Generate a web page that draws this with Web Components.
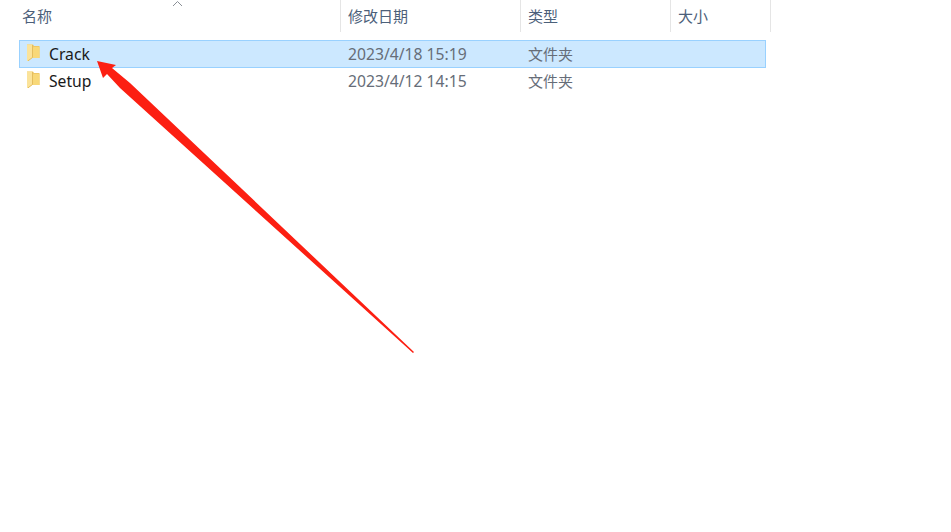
<!DOCTYPE html>
<html>
<head>
<meta charset="utf-8">
<style>
  html, body { margin: 0; height: 100%; background: #fff; overflow: hidden; }
</style>
</head>
<body>
<file-list>
  <list-header slot="header" label="名称" width="341" pad="22" sorted></list-header>
  <list-header slot="header" label="修改日期" width="180" pad="7"></list-header>
  <list-header slot="header" label="类型" width="150" pad="7"></list-header>
  <list-header slot="header" label="大小" width="100" pad="7"></list-header>
  <file-row name="Crack" date="2023/4/18 15:19" type="文件夹" selected></file-row>
  <file-row name="Setup" date="2023/4/12 14:15" type="文件夹"></file-row>
</file-list>
<script>
(function () {
    const FONT = '"Noto Sans CJK SC", "Noto Sans", sans-serif';

    class ListHeader extends HTMLElement {
        constructor() {
            super();
            this.attachShadow({ mode: "open" }).innerHTML = `
              <style>
                :host {
                    display: flex;
                    align-items: center;
                    box-sizing: border-box;
                    height: 32px;
                    padding-bottom: 2px;
                    position: relative;
                    border-right: 1px solid #e5e5e5;
                    font: 15px ${FONT};
                    color: #4c607a;
                }
                svg { position: absolute; left: 172px; top: 0; }
              </style>
              <span id="label"></span>
            `;
        }
        connectedCallback() {
            this.style.width = this.getAttribute("width") + "px";
            this.style.paddingLeft = this.getAttribute("pad") + "px";
            this.shadowRoot.getElementById("label").textContent = this.getAttribute("label");
            if (this.hasAttribute("sorted") && !this.shadowRoot.querySelector("svg")) {
                this.shadowRoot.innerHTML += `<svg width="12" height="7" viewBox="0 0 12 7"><path d="M1 6 L5.5 1.5 L10 6" fill="none" stroke="#8a8f96" stroke-width="1"/></svg>`;
            }
        }
    }
    customElements.define("list-header", ListHeader);

    class FileRow extends HTMLElement {
        constructor() {
            super();
            this.attachShadow({ mode: "open" }).innerHTML = `
              <style>
                :host {
                    display: grid;
                    grid-template-columns: 321px 180px 1fr;
                    align-items: center;
                    box-sizing: border-box;
                    height: 26px;
                    border: 1px solid transparent;
                    font: 15px ${FONT};
                    color: #666d78;
                }
                :host([selected]) {
                    height: 28px;
                    background: #cce8ff;
                    border-color: #99d1ff;
                }
                .name { display: flex; align-items: center; gap: 9px; padding-left: 7px; color: #1a1a1a; font-family: "Noto Sans", sans-serif; font-size: 15.7px; }
                .date { padding-left: 7px; font-family: "Noto Sans", sans-serif; font-size: 15.7px; }
                .type { padding: 0 0 2px 7px; }
                svg { display: block; margin-top: -3px; }
              </style>
              <div class="name">
                <svg width="13" height="17" viewBox="0 0 13 17">
                  <path d="M0 0.5 H6 L7 2 H12.5 V14 H0 Z" fill="#efc765"/>
                  <path d="M7 3 H12.5 V14 H5 V4 Z" fill="#f8d878"/>
                  <path d="M0 0.5 H5.5 V13.5 L1 17 H0 Z" fill="#fbe39a"/>
                  <path d="M5.5 1 V13.5 L1 16.8" fill="none" stroke="#e4bd5e" stroke-width="1"/>
                </svg>
                <span id="name"></span>
              </div>
              <div class="date" id="date"></div>
              <div class="type" id="type"></div>
            `;
        }
        connectedCallback() {
            for (const key of ["name", "date", "type"]) {
                this.shadowRoot.getElementById(key).textContent = this.getAttribute(key);
            }
        }
    }
    customElements.define("file-row", FileRow);

    class FileList extends HTMLElement {
        constructor() {
            super();
            this.attachShadow({ mode: "open" }).innerHTML = `
              <style>
                :host { display: block; position: relative; width: 951px; height: 532px; background: #fff; }
                .head { display: flex; }
                .rows { display: flex; flex-direction: column; width: 747px; margin: 8px 0 0 19px; }
                /* the red annotation arrow drawn over the list */
                svg { position: absolute; left: 0; top: 0; pointer-events: none; }
              </style>
              <div class="head"><slot name="header"></slot></div>
              <div class="rows"><slot></slot></div>
              <svg width="951" height="532" viewBox="0 0 951 532">
                <path d="M97 61 L116 65 L112 68 L130 83 L414 352 L413 353 L120 88 L107 74 L103 78 Z" fill="#fc1f12"/>
              </svg>
            `;
        }
    }
    customElements.define("file-list", FileList);
})();
</script>
</body>
</html>
